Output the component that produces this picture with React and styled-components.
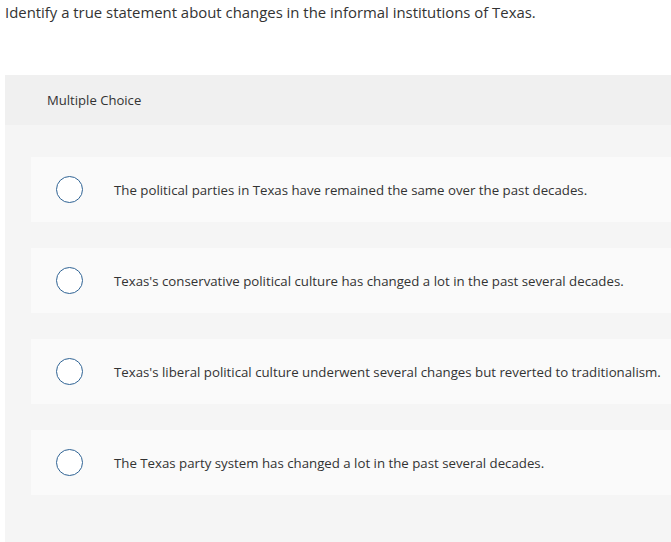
import styled, { createGlobalStyle } from 'styled-components';

const GlobalStyle = createGlobalStyle`
  html, body {
    margin: 0;
    padding: 0;
    background: #ffffff;
    font-family: "Open Sans", Lato, sans-serif;
    color: #333333;
  }
`;

const Page = styled.div`
  width: 671px;
  height: 542px;
  overflow: hidden;
`;

const Question = styled.p`
  margin: 0;
  padding: 2px 0 0 5px;
  height: 75px;
  box-sizing: border-box;
  font-size: 14.9px;
  line-height: 20px;
  color: #333333;
`;

const Panel = styled.section`
  margin-left: 5px;
  background: #f5f5f5;
  height: 467px;
`;

const PanelHeader = styled.div`
  height: 50px;
  background: #f0f0f0;
  display: flex;
  align-items: center;
  padding-left: 42px;
  font-size: 13.1px;
  color: #333333;
`;

const Options = styled.div`
  display: flex;
  flex-direction: column;
  gap: 26px;
  padding: 32px 0 0 26px;
`;

const Option = styled.label`
  display: flex;
  align-items: center;
  height: 65px;
  background: #fafafa;
  padding-left: 25px;
  cursor: pointer;
`;

const Radio = styled.span`
  width: 25px;
  height: 25px;
  border-radius: 50%;
  border: 1.6px solid #2f6394;
  background: #ffffff;
  flex-shrink: 0;
`;

const OptionText = styled.span`
  margin-left: 31px;
  font-size: 13.25px;
  color: #333333;
`;

const choices = [
  'The political parties in Texas have remained the same over the past decades.',
  "Texas's conservative political culture has changed a lot in the past several decades.",
  "Texas's liberal political culture underwent several changes but reverted to traditionalism.",
  'The Texas party system has changed a lot in the past several decades.',
];

export default function App() {
  return (
    <Page>
      <GlobalStyle />
      <Question>
        Identify a true statement about changes in the informal institutions of Texas.
      </Question>
      <Panel>
        <PanelHeader>Multiple Choice</PanelHeader>
        <Options>
          {choices.map((c) => (
            <Option key={c}>
              <Radio />
              <OptionText>{c}</OptionText>
            </Option>
          ))}
        </Options>
      </Panel>
    </Page>
  );
}
